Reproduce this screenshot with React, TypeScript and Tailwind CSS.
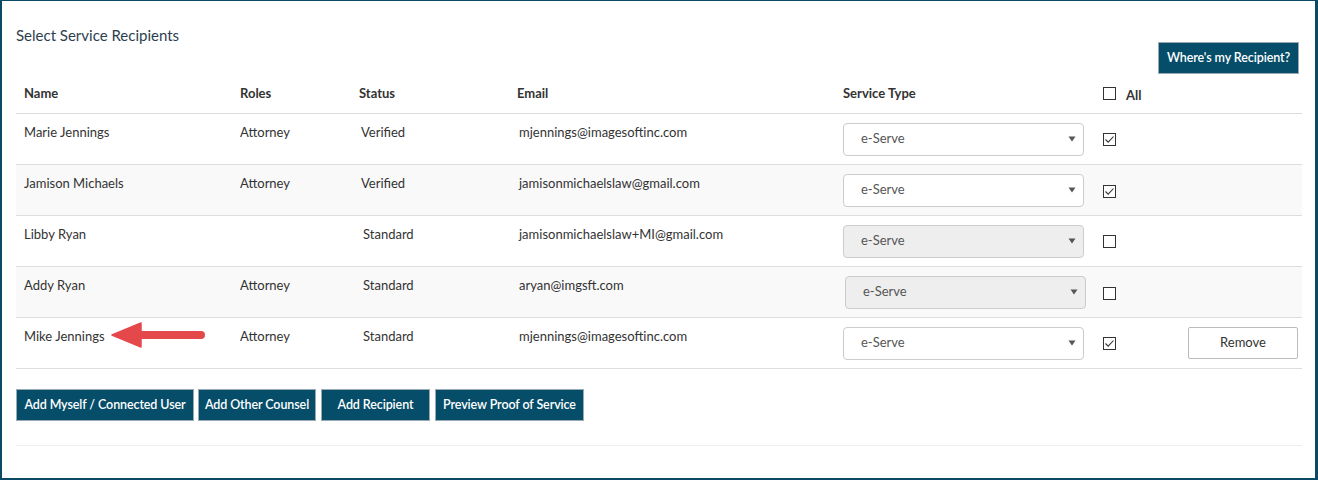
import { useState } from "react";

interface Recipient {
  name: string;
  role: string;
  status: string;
  email: string;
  disabled: boolean;
  checked: boolean;
  removable?: boolean;
}

const recipients: Recipient[] = [
  { name: "Marie Jennings", role: "Attorney", status: "Verified", email: "mjennings@imagesoftinc.com", disabled: false, checked: true },
  { name: "Jamison Michaels", role: "Attorney", status: "Verified", email: "jamisonmichaelslaw@gmail.com", disabled: false, checked: true },
  { name: "Libby Ryan", role: "", status: "Standard", email: "jamisonmichaelslaw+MI@gmail.com", disabled: true, checked: false },
  { name: "Addy Ryan", role: "Attorney", status: "Standard", email: "aryan@imgsft.com", disabled: true, checked: false },
  { name: "Mike Jennings", role: "Attorney", status: "Standard", email: "mjennings@imagesoftinc.com", disabled: false, checked: true, removable: true },
];

const cols = "grid grid-cols-[216px_119px_158px_326px_260px_85px_1fr]";

function Check({ checked }: { checked: boolean }) {
  return (
    <div className="w-[13px] h-[13px] border border-[#333] bg-white flex items-center justify-center">
      {checked && (
        <svg width="11" height="11" viewBox="0 0 11 11">
          <path d="M1.5 5.5 L4.2 8.2 L9.5 2.5" fill="none" stroke="#333" strokeWidth="1.1" />
        </svg>
      )}
    </div>
  );
}

function ServiceSelect({ disabled }: { disabled: boolean }) {
  return (
    <div
      className={`w-[241px] h-[33px] rounded-[4px] border border-[#ccc] flex items-center justify-between pl-[17px] pr-[7px] text-[13px] text-[#555] ${
        disabled ? "bg-[#eeeeee]" : "bg-white"
      }`}
    >
      <span>e-Serve</span>
      <svg width="8" height="6" viewBox="0 0 8 6">
        <path d="M0.5 0.5 L7.5 0.5 L4 5.5 Z" fill="#555" />
      </svg>
    </div>
  );
}

function DarkButton({ label, width }: { label: string; width: string }) {
  return (
    <button
      className={`${width} h-[32px] bg-[#064d69] border border-[#9aaab3] text-white text-[12.5px] font-semibold whitespace-nowrap tracking-[-0.1px]`}
    >
      {label}
    </button>
  );
}

export default function App() {
  const [rows] = useState(recipients);

  return (
    <div
      className="w-[1318px] h-[480px] bg-white border-t border-l-2 border-r-[3px] border-b-2 border-[#0b4a66] text-[#333]"
      style={{ fontFamily: "Lato, 'Open Sans', sans-serif" }}
    >
      <div className="pl-[14px] pr-[13px] pt-[23px]">
        {/* TITLE + HELP BUTTON */}
        <div className="flex justify-between">
          <h2 className="text-[15px] text-[#2d3e50] leading-[20px] pt-px">Select Service Recipients</h2>
          <div className="pt-[18px] pr-[3px]">
            <DarkButton label="Where's my Recipient?" width="w-[141px]" />
          </div>
        </div>

        {/* TABLE HEADER */}
        <div className={`${cols} h-[40px] items-center border-b border-[#ddd] text-[13px] font-bold mt-[-28px] pt-[27px] box-content`}>
          <div className="pl-2 pt-px">Name</div>
          <div className="pl-2 pt-px">Roles</div>
          <div className="pl-2 pt-px">Status</div>
          <div className="pl-2 pt-px">Email</div>
          <div className="pl-2 pt-px">Service Type</div>
          <div className="pl-2 flex items-center gap-[10px] pt-px">
            <Check checked={false} />
            <span className="pt-[4px]">All</span>
          </div>
          <div />
        </div>

        {/* ROWS */}
        {rows.map((r, i) => (
          <div
            key={r.name}
            className={`${cols} h-[51px] border-b border-[#ddd] text-[13px] ${i % 2 === 1 ? "bg-[#f9f9f9]" : "bg-white"}`}
          >
            <div className="pl-2 pt-[9px] flex items-start gap-[6px]">
              <span>{r.name}</span>
              {r.removable && (
                <svg width="96" height="30" viewBox="0 0 96 30" className="mt-[-7px]">
                  <path d="M26 15 L90 15" stroke="#e5484b" strokeWidth="8" strokeLinecap="round" />
                  <path d="M1 15 L30 3 L30 27 Z" fill="#e5484b" strokeLinejoin="round" stroke="#e5484b" strokeWidth="1.5" />
                </svg>
              )}
            </div>
            <div className="pl-2 pt-[9px]">{r.role}</div>
            <div className={`pt-[9px] ${i < 2 ? "pl-[10px]" : "pl-[12px]"}`}>{r.status}</div>
            <div className="pl-[10px] pt-[9px]">{r.email}</div>
            <div className={`flex items-center ${i === 3 ? "pl-[10px]" : "pl-2"}`}>
              <ServiceSelect disabled={r.disabled} />
            </div>
            <div className={`pl-2 flex items-center ${i % 2 === 1 ? "pt-[3px]" : ""}`}>
              <Check checked={r.checked} />
            </div>
            <div className="flex items-center justify-end pr-[4px]">
              {r.removable && (
                <button className="w-[110px] h-[32px] border border-[#bbb] rounded-[2px] bg-white text-[13px] text-[#333]">
                  Remove
                </button>
              )}
            </div>
          </div>
        ))}

        {/* ACTIONS */}
        <div className="flex pt-[20px] pb-[24px] border-b border-[#eee]">
          <DarkButton label="Add Myself / Connected User" width="w-[178px]" />
          <div className="pl-[4px]">
            <DarkButton label="Add Other Counsel" width="w-[118px]" />
          </div>
          <div className="pl-[5px]">
            <DarkButton label="Add Recipient" width="w-[109px]" />
          </div>
          <div className="pl-[5px]">
            <DarkButton label="Preview Proof of Service" width="w-[149px]" />
          </div>
        </div>
      </div>
    </div>
  );
}
